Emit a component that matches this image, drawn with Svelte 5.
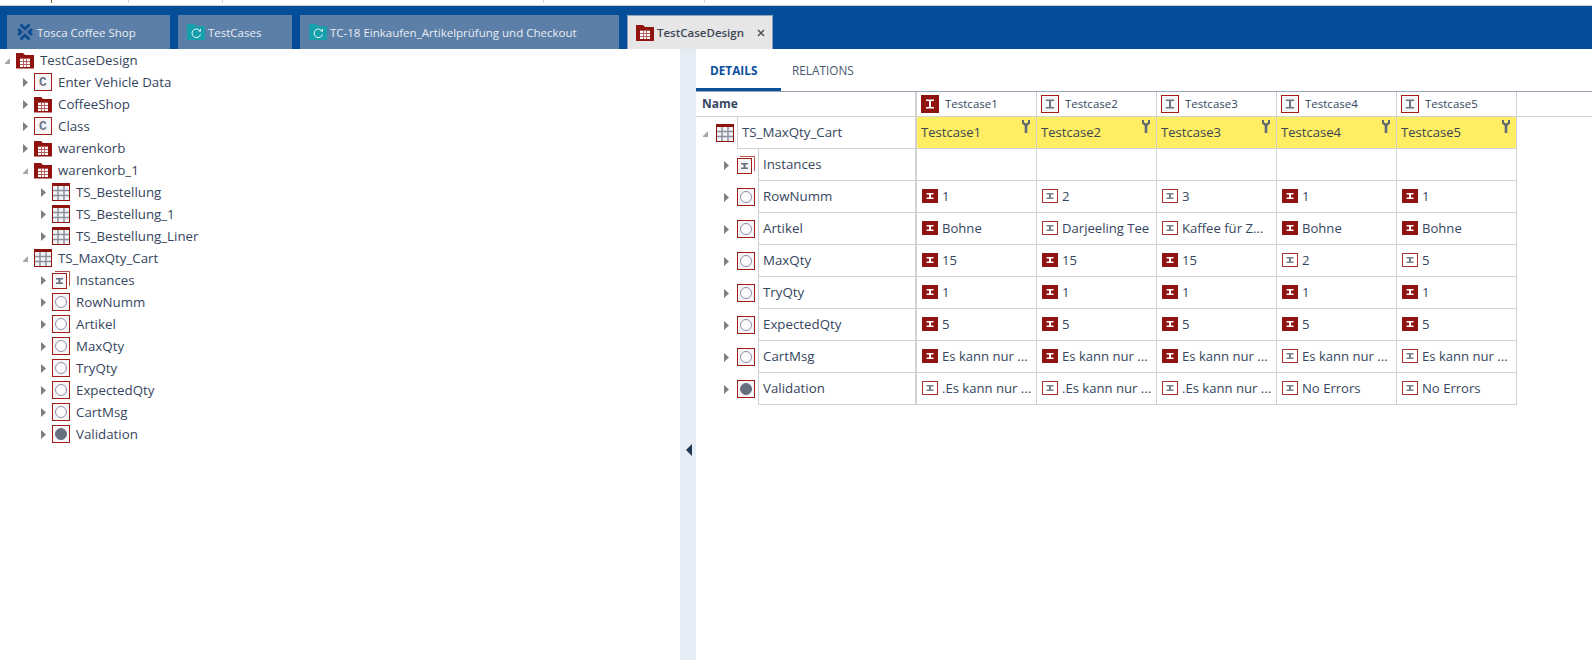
<script>
	// leftover marks of the window chrome above the tab bar: gap before each tick
	const ticks = [
		{ gap: 51, color: '#7d6a3a' },
		{ gap: 76, color: '#d8d8d8' },
		{ gap: 93, color: '#d8d8d8' },
		{ gap: 320, color: '#d8d8d8' },
		{ gap: 160, color: '#d8d8d8' }
	];

	const tabs = [
		{ label: 'Tosca Coffee Shop', icon: 'tosca', width: 163 },
		{ label: 'TestCases', icon: 'sync', width: 114 },
		{ label: 'TC-18 Einkaufen_Artikelprüfung und Checkout', icon: 'sync', width: 319 }
	];

	const tree = [
		{ label: 'TestCaseDesign', icon: 'folder', depth: 0, open: true },
		{ label: 'Enter Vehicle Data', icon: 'class', depth: 1 },
		{ label: 'CoffeeShop', icon: 'folder', depth: 1 },
		{ label: 'Class', icon: 'class', depth: 1 },
		{ label: 'warenkorb', icon: 'folder', depth: 1 },
		{ label: 'warenkorb_1', icon: 'folder', depth: 1, open: true },
		{ label: 'TS_Bestellung', icon: 'sheet', depth: 2 },
		{ label: 'TS_Bestellung_1', icon: 'sheet', depth: 2 },
		{ label: 'TS_Bestellung_Liner', icon: 'sheet', depth: 2 },
		{ label: 'TS_MaxQty_Cart', icon: 'sheet', depth: 1, open: true },
		{ label: 'Instances', icon: 'instances', depth: 2 },
		{ label: 'RowNumm', icon: 'attr', depth: 2 },
		{ label: 'Artikel', icon: 'attr', depth: 2 },
		{ label: 'MaxQty', icon: 'attr', depth: 2 },
		{ label: 'TryQty', icon: 'attr', depth: 2 },
		{ label: 'ExpectedQty', icon: 'attr', depth: 2 },
		{ label: 'CartMsg', icon: 'attr', depth: 2 },
		{ label: 'Validation', icon: 'attrFilled', depth: 2 }
	];

	const columns = [
		{ name: 'Testcase1', solid: true },
		{ name: 'Testcase2' },
		{ name: 'Testcase3' },
		{ name: 'Testcase4' },
		{ name: 'Testcase5' }
	];

	// "!" prefix marks the solid red instance icon
	const rows = [
		{ name: 'RowNumm', icon: 'attr', cells: ['!1', '2', '3', '!1', '!1'] },
		{ name: 'Artikel', icon: 'attr', cells: ['!Bohne', 'Darjeeling Tee', 'Kaffee für Z...', '!Bohne', '!Bohne'] },
		{ name: 'MaxQty', icon: 'attr', cells: ['!15', '!15', '!15', '2', '5'] },
		{ name: 'TryQty', icon: 'attr', cells: ['!1', '!1', '!1', '!1', '!1'] },
		{ name: 'ExpectedQty', icon: 'attr', cells: ['!5', '!5', '!5', '!5', '!5'] },
		{ name: 'CartMsg', icon: 'attr', cells: ['!Es kann nur ...', '!Es kann nur ...', '!Es kann nur ...', 'Es kann nur ...', 'Es kann nur ...'] },
		{ name: 'Validation', icon: 'attrFilled', cells: ['.Es kann nur ...', '.Es kann nur ...', '.Es kann nur ...', 'No Errors', 'No Errors'] }
	];
</script>

{#snippet icon(name)}
	<svg class="icon" width="18" height="18" viewBox="0 0 18 18">
		{#if name === 'folder'}
			<path d="M0 2h7l2 2h9v13.500H0z" fill="#8f1410" />
			<path d="M4 7h10v9H4z" fill="#fff" />
			<path d="M4 7.500h10M4 10.500h10M4 13.500h10M7.500 8v8M10.500 8v8" stroke="#b5605c" fill="none" />
		{:else if name === 'sheet'}
			<path d="M0 0h18v18H0z" fill="#8f1410" />
			<path d="M1 3h16v14H1z" fill="#f2f3f5" />
			<path d="M1 7.500h16M1 12.500h16M6 3v14M12 3v14" stroke="#8b93a1" stroke-width="1.500" fill="none" />
		{:else if name === 'class'}
			<rect x="0.5" y="0.5" width="17" height="17" fill="#f6f6f8" stroke="#a21d18" />
			<text x="9" y="13" class="glyph">C</text>
		{:else if name === 'attr' || name === 'attrFilled'}
			<rect x="0.5" y="0.5" width="17" height="17" fill="#f6f6f8" stroke="#a21d18" />
			<circle cx="9" cy="9" r="5.500" fill={name === 'attrFilled' ? '#667080' : '#fbfbfc'} stroke={name === 'attrFilled' ? '#667080' : '#8a93a2'} />
		{:else if name === 'instances'}
			<path d="M3 .5h14.500V15" fill="none" stroke="#b5504c" />
			<rect x="0.5" y="2.500" width="14" height="15" fill="#f6f6f8" stroke="#a21d18" />
			<path d="M4 7h7v1.500H8.500v3H11V13H4v-1.500h2.500v-3H4z" fill="#667080" />
		{/if}
	</svg>
{/snippet}

{#snippet beam(solid)}
	<svg class="beam" width="16" height="14" viewBox="0 0 16 14">
		{#if solid}
			<rect width="16" height="14" fill="#8f1410" />
			<path d="M4.500 4h7v1.500H9v3h2.500V10h-7V8.500H7v-3H4.500z" fill="#fff" />
		{:else}
			<rect x="0.5" y="0.5" width="15" height="13" fill="#fff" stroke="#a8332e" />
			<path d="M4.500 4h7v1.500H9v3h2.500V10h-7V8.500H7v-3H4.500z" fill="#7a8290" />
		{/if}
	</svg>
{/snippet}

{#snippet headBeam(solid)}
	<svg class="head-beam" width="18" height="18" viewBox="0 0 18 18">
		{#if solid}
			<rect width="18" height="18" fill="#8f1410" />
			<path d="M5 4.500h8v1.500h-3v6h3v1.500H5V12h3V6H5z" fill="#fff" />
		{:else}
			<rect x="0.5" y="0.5" width="17" height="17" fill="#f4f5f7" stroke="#a21d18" />
			<path d="M5 4.500h8v1.500h-3v6h3v1.500H5V12h3V6H5z" fill="#6b7483" />
		{/if}
	</svg>
{/snippet}

{#snippet arrow(open)}
	<svg class="arrow" width="5" height="9" viewBox="0 0 5 9">
		{#if open}
			<path d="M5 2v6H-1z" fill="#a6a6a6" />
		{:else}
			<path d="M0 0l5 4.500L0 9z" fill="#7f7f7f" />
		{/if}
	</svg>
{/snippet}

{#snippet wrench()}
	<svg class="wrench" width="8" height="13" viewBox="0 0 8 13">
		<path d="M0 0h2v2.500L4 3.500l2-1V0h2v3.500L5.300 5.800V13H2.700V5.800L0 3.500z" fill="#5f6875" />
	</svg>
{/snippet}

{#snippet syncIcon()}
	<svg class="tab-icon" width="18" height="16" viewBox="0 0 18 16">
		<path d="M0 0h7l2 2h9v14H0z" fill="#17a0ac" />
		<path d="M13 7a4.300 4.300 0 1 0 .5 3.500" fill="none" stroke="#e8f6f7" />
		<path d="M11 7.500h3v-3z" fill="#e8f6f7" />
	</svg>
{/snippet}

<div class="app">
	<div class="topstrip">
		{#each ticks as tick}
			<i style="margin-left: {tick.gap}px; background: {tick.color}"></i>
		{/each}
	</div>

	<header class="tabbar">
		{#each tabs as tab}
			<div class="tab" style="width: {tab.width}px">
				{#if tab.icon === 'tosca'}
					<svg class="tab-icon tosca" width="16" height="18" viewBox="0 0 16 18">
						<path d="M3.500 1.500L8 6l4.500-4.500M3.500 16.500L8 12l4.500 4.500M1 6l3 3-3 3M15 6l-3 3 3 3" fill="none" stroke="#0f4a94" stroke-width="3" />
					</svg>
				{:else}
					{@render syncIcon()}
				{/if}
				<span>{tab.label}</span>
			</div>
		{/each}
		<div class="tab active">
			<svg class="tab-icon" width="18" height="16" viewBox="0 0 18 16">
				<path d="M0 0h7l2 2h9v14H0z" fill="#8f1410" />
				<path d="M4 5h10v9H4z" fill="#fff" />
				<path d="M4 5.500h10M4 8.500h10M4 11.500h10M7.500 6v8M10.500 6v8" stroke="#b5605c" fill="none" />
			</svg>
			<span>TestCaseDesign</span>
			<svg class="close" width="8" height="8" viewBox="0 0 8 8">
				<path d="M1 1l6 6M7 1L1 7" stroke="#4a4f58" stroke-width="1.500" />
			</svg>
		</div>
	</header>

	<main class="body">
		<section class="tree">
			{#each tree as node}
				<div class="node" style="padding-left: {2 + node.depth * 18}px">
					<span class="arrow-box">{@render arrow(node.open)}</span>
					{@render icon(node.icon)}
					<span class="node-label">{node.label}</span>
				</div>
			{/each}
		</section>

		<div class="splitter">
			<svg width="6" height="12" viewBox="0 0 6 12"><path d="M6 0v12L0 6z" fill="#1f3650" /></svg>
		</div>

		<section class="details">
			<nav class="subtabs">
				<div class="subtab current">DETAILS</div>
				<div class="subtab">RELATIONS</div>
			</nav>

			<div class="grid">
				<div class="head name-head">Name</div>
				{#each columns as col}
					<div class="head col-head">
						{@render headBeam(col.solid)}
						<span>{col.name}</span>
					</div>
				{/each}
				<div class="head head-rest"></div>

				<div class="name-cell top">
					<span class="arrow-box">{@render arrow(true)}</span>
					{@render icon('sheet')}
					<span class="name-text">TS_MaxQty_Cart</span>
				</div>
				{#each columns as col}
					<div class="cell yellow">
						<span>{col.name}</span>
						{@render wrench()}
					</div>
				{/each}

				<div class="name-cell child">
					<span class="arrow-box">{@render arrow(false)}</span>
					{@render icon('instances')}
					<span class="name-text">Instances</span>
				</div>
				{#each columns as col}
					<div class="cell"></div>
				{/each}

				{#each rows as row}
					<div class="name-cell child">
						<span class="arrow-box">{@render arrow(false)}</span>
						{@render icon(row.icon)}
						<span class="name-text">{row.name}</span>
					</div>
					{#each row.cells as value}
						<div class="cell">
							{@render beam(value.startsWith('!'))}
							<span class="value">{value.replace('!', '')}</span>
						</div>
					{/each}
				{/each}
			</div>
		</section>
	</main>
</div>

<style>
	:global(body) {
		margin: 0;
		background: #fff;
	}

	.app {
		width: 1592px;
		height: 660px;
		overflow: hidden;
		display: flex;
		flex-direction: column;
		font-family: 'Open Sans', sans-serif;
		font-size: 13.3px;
		color: #35465e;
	}

	.topstrip {
		height: 6px;
		box-sizing: border-box;
		background: #fff;
		border-bottom: 1px solid #c9ced6;
		display: flex;
	}

	.topstrip i {
		width: 1px;
		height: 3px;
	}

	.tabbar {
		height: 43px;
		box-sizing: border-box;
		padding: 9px 0 0 7px;
		background: #034d99;
		display: flex;
		gap: 8px;
	}

	.tab {
		box-sizing: border-box;
		height: 34px;
		padding-left: 9px;
		display: flex;
		align-items: center;
		gap: 3px;
		background: #5c7fa7;
		color: #e9eef5;
		font-size: 11.5px;
	}

	.tab .tosca {
		margin: 0 1px;
	}

	.tab.active {
		width: 146px;
		padding-left: 8px;
		background: #e6e6e6;
		border: 1px solid #8ea2bd;
		border-bottom: none;
		color: #3c4756;
		font-weight: 600;
	}

	.tab.active .close {
		margin-left: 10px;
	}

	.body {
		flex: 1;
		display: flex;
		min-height: 0;
	}

	.tree {
		width: 680px;
	}

	.node {
		height: 22px;
		display: flex;
		align-items: center;
	}

	.arrow-box {
		width: 10px;
		margin-right: 6px;
		display: flex;
		justify-content: center;
	}

	.node .arrow-box {
		margin-right: 4px;
	}

	.node-label {
		margin-left: 6px;
	}

	.icon {
		flex: none;
	}

	.glyph {
		font-family: 'Liberation Mono', monospace;
		font-size: 13px;
		font-weight: 700;
		fill: #6f7785;
		text-anchor: middle;
	}

	.splitter {
		width: 16px;
		background: #e6ecf5;
		display: flex;
		align-items: center;
		justify-content: center;
	}

	.splitter svg {
		margin: 190px 0 0 2px;
	}

	.details {
		flex: 1;
		min-width: 0;
	}

	.subtabs {
		height: 43px;
		box-sizing: border-box;
		display: flex;
		border-bottom: 1px solid #9aa5b4;
	}

	.subtab {
		width: 88px;
		box-sizing: border-box;
		padding: 13px 0 0 11px;
		font-size: 11.8px;
		color: #46566c;
	}

	.subtab.current {
		width: 85px;
		height: 42px;
		padding-left: 14px;
		color: #0b4f9c;
		font-weight: 700;
		border-bottom: 3px solid #0b4f9c;
	}

	.grid {
		display: grid;
		grid-template-columns: 221px repeat(5, 120px) 1fr;
		grid-template-rows: 25px repeat(9, 32px);
	}

	.head {
		box-sizing: border-box;
		display: flex;
		align-items: center;
		border-bottom: 1px solid #d2d2d2;
	}

	.name-head {
		padding: 0 0 2px 6px;
		font-weight: 700;
		font-size: 12px;
		border-right: 2px solid #d2d2d2;
	}

	.col-head {
		padding-left: 4px;
		gap: 7px;
		font-size: 11.5px;
		border-right: 1px solid #d2d2d2;
	}

	.col-head span {
		padding-bottom: 2px;
		margin-left: -1px;
	}

	.name-cell {
		box-sizing: border-box;
		grid-column: 1;
		display: flex;
		align-items: center;
		border-right: 2px solid #d2d2d2;
	}

	.name-cell.top {
		padding-left: 4px;
	}

	.name-cell.child {
		padding-left: 25px;
	}

	.name-text {
		flex: 1;
		align-self: stretch;
		display: flex;
		align-items: center;
		margin-left: 3px;
		padding: 0 0 2px 4px;
		border-left: 1px solid #d2d2d2;
		border-bottom: 1px solid #d2d2d2;
	}

	.cell {
		box-sizing: border-box;
		display: flex;
		align-items: center;
		padding: 0 0 1px 5px;
		gap: 4px;
		position: relative;
		border-right: 1px solid #d2d2d2;
		border-bottom: 1px solid #d2d2d2;
		white-space: nowrap;
		overflow: hidden;
		font-size: 13.1px;
	}

	.value {
		padding-bottom: 1px;
	}

	.cell.yellow {
		padding: 0 0 2px 4px;
		background: #ffed63;
		color: #3a4552;
	}

	.wrench {
		position: absolute;
		top: 3px;
		right: 6px;
	}
</style>
